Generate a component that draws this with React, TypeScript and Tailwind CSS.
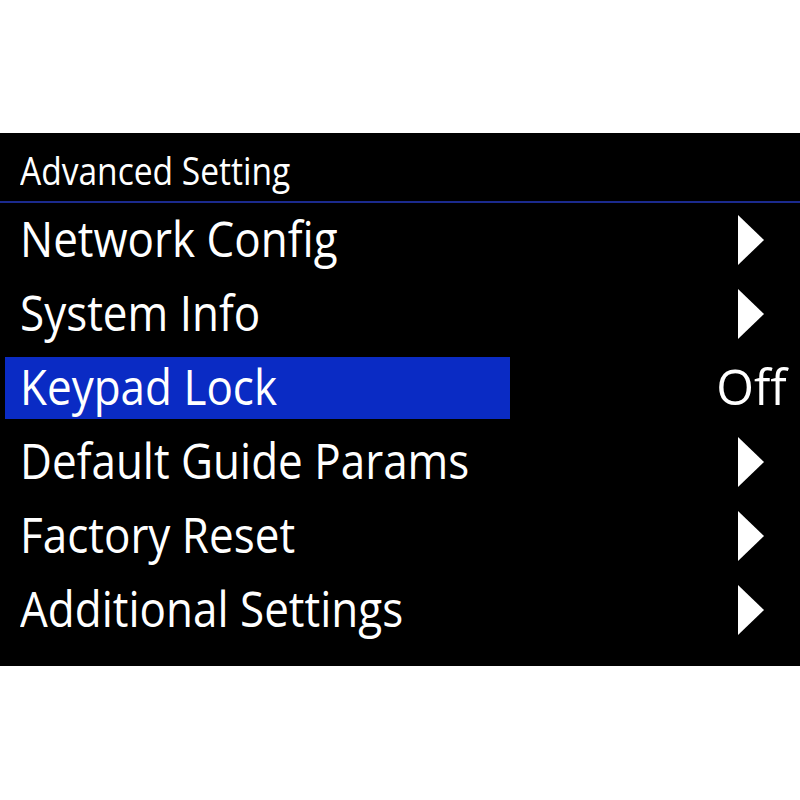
import React from "react";

type Row = { label: string; kind: "arrow" | "value"; value?: string; active?: boolean };

const rows: Row[] = [
  { label: "Network Config", kind: "arrow" },
  { label: "System Info", kind: "arrow" },
  { label: "Keypad Lock", kind: "value", value: "Off", active: true },
  { label: "Default Guide Params", kind: "arrow" },
  { label: "Factory Reset", kind: "arrow" },
  { label: "Additional Settings", kind: "arrow" },
];

function Arrow() {
  return (
    <svg width="26" height="50" viewBox="0 0 26 50" className="block">
      <polygon points="0,0 26,25 0,50" fill="#ffffff" />
    </svg>
  );
}

export default function App() {
  return (
    <div className="w-[800px] h-[800px] bg-white overflow-hidden">
      <div className="mt-[133px] h-[533px] bg-black flex flex-col text-white font-['Open_Sans',sans-serif]">
        <div className="h-[68px] flex items-end pb-[12px] pl-[20px]">
          <span className="text-[39px] leading-none origin-left scale-x-[0.86] whitespace-nowrap">
            Advanced Setting
          </span>
        </div>
        <div className="h-[2px] bg-[#1b2a8e]" />
        <div className="flex flex-col">
          {rows.map((r) => (
            <div key={r.label} className="h-[74px] flex items-center">
              <div
                className={
                  "ml-[5px] w-[505px] h-[62px] flex items-center pl-[15px] pb-[5px] " +
                  (r.active ? "bg-[#0a2bc4]" : "")
                }
              >
                <span className="text-[50px] leading-none origin-left scale-x-[0.88] whitespace-nowrap">
                  {r.label}
                </span>
              </div>
              <div className="flex-1 flex items-center justify-end pr-[13px]">
                {r.kind === "arrow" ? (
                  <div className="mr-[23px]">
                    <Arrow />
                  </div>
                ) : (
                  <span className="text-[50px] leading-none pb-[5px] origin-right scale-x-[0.97] whitespace-nowrap">
                    {r.value}
                  </span>
                )}
              </div>
            </div>
          ))}
        </div>
      </div>
    </div>
  );
}
